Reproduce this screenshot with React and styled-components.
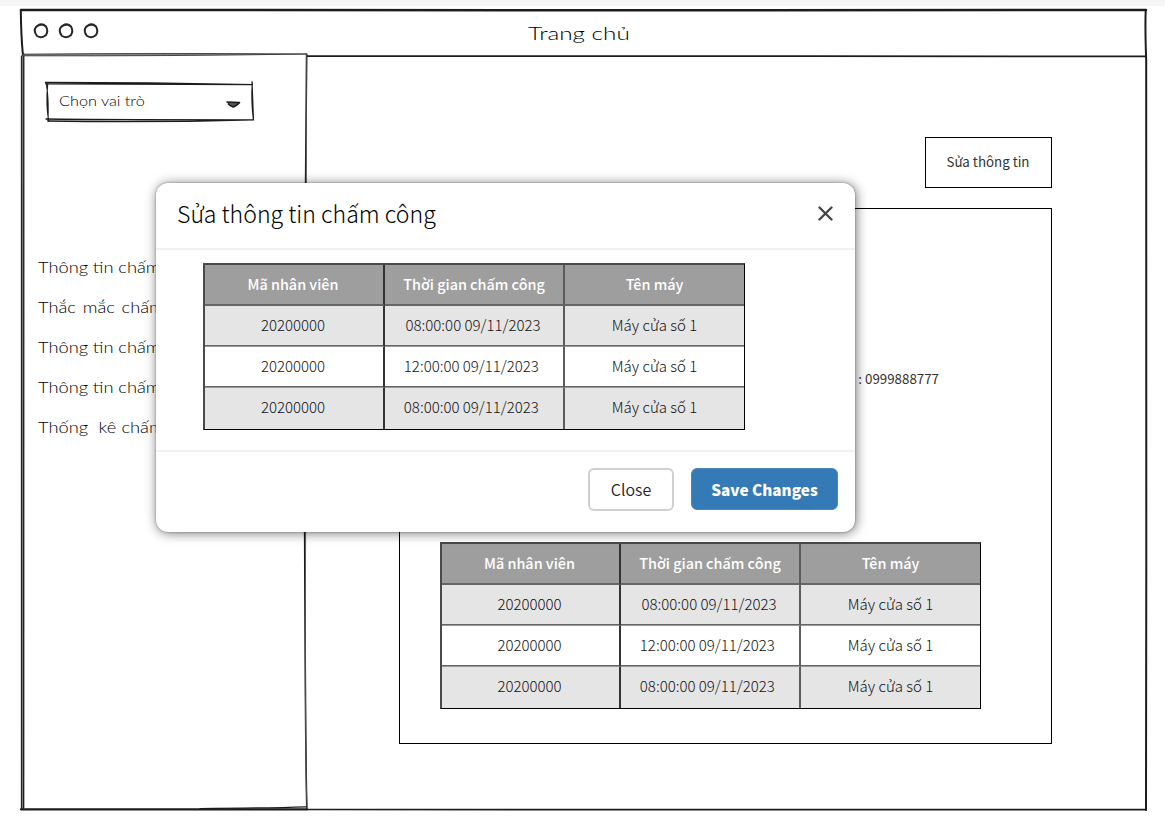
import React from 'react';
import styled, { createGlobalStyle } from 'styled-components';

const GlobalStyle = createGlobalStyle`
  * { box-sizing: border-box; }
  body {
    margin: 0;
    background: #fff;
    color: #333;
    font-family: "Noto Sans CJK SC", "Noto Sans", sans-serif;
  }
`;

const Page = styled.div`
  position: relative;
  width: 1165px;
  height: 825px;
  overflow: hidden;
`;

const TopStrip = styled.div`
  height: 6px;
  background: #f5f5f5;
`;

const Frame = styled.div`
  position: relative;
  display: flex;
  flex-direction: column;
  width: 1126px;
  height: 802px;
  margin: 3px 0 0 21px;
`;

const Sketch = styled.svg`
  position: absolute;
  inset: 0;
  width: 100%;
  height: 100%;
  overflow: visible;
  pointer-events: none;
  fill: none;
  stroke: #1c1c1c;
  stroke-linecap: round;
`;

const TitleBar = styled.header`
  display: flex;
  align-items: center;
  height: 46px;
`;

const Dots = styled.svg`
  width: 70px;
  height: 20px;
  margin: -2px 0 0 11px;
  fill: none;
  stroke: #262626;
  stroke-width: 2;
`;

const Hand = styled.span`
  display: block;
  width: max-content;
  font-family: Lato, "Open Sans", sans-serif;
  font-weight: 300;
  font-size: ${(p) => p.$size}px;
  line-height: 20px;
  word-spacing: ${(p) => p.$gap || 0}px;
  color: #000;
  white-space: pre;
  transform: scaleX(${(p) => p.$stretch});
  transform-origin: left center;
`;

const PageTitle = styled.div`
  margin: 1px 0 0 426px;
`;

const Columns = styled.div`
  display: flex;
  flex: 1;
`;

const Sidebar = styled.aside`
  width: 286px;
  padding: 27px 0 0 25px;
`;

const RoleSelect = styled.div`
  position: relative;
  display: flex;
  align-items: center;
  justify-content: space-between;
  width: 207px;
  height: 39px;
  padding: 0 12px 1px 13px;
`;

const Arrow = styled.svg`
  width: 16px;
  height: 9px;
  margin-top: 6px;
  fill: #555;
  stroke: #1c1c1c;
  stroke-linejoin: round;
`;

const Menu = styled.nav`
  display: flex;
  flex-direction: column;
  gap: 20px;
  margin: 136px 0 0 -8px;
`;

const Main = styled.main`
  display: flex;
  flex-direction: column;
  align-items: flex-end;
  gap: 20px;
  width: 745px;
  padding-top: 82px;
`;

const EditButton = styled.button`
  width: 127px;
  height: 51px;
  padding: 0 1px 2px 0;
  border: 1px solid #000;
  background: #fff;
  color: #333;
  font: 400 13.33px "Noto Sans CJK SC", "Noto Sans", sans-serif;
`;

const Card = styled.section`
  display: flex;
  flex-direction: column;
  justify-content: space-between;
  width: 653px;
  height: 536px;
  padding: 160px 0 34px 40px;
  border: 1px solid #000;
`;

const Phone = styled.div`
  align-self: flex-end;
  margin-right: 112px;
  font-size: 13.33px;
  line-height: 20px;
`;

const Table = styled.div`
  display: grid;
  grid-template-columns: ${(p) => p.$columns};
  grid-auto-rows: 41px;
  width: max-content;
  border: solid #000;
  border-width: 2px 1px 1px 2px;
  border-top-color: #4a4a4a;
  border-left-color: #4a4a4a;
`;

const Cell = styled.div`
  display: flex;
  align-items: center;
  justify-content: center;
  padding: 0 ${(p) => (p.$col === 2 ? 0 : p.$head && p.$col === 1 ? 0 : 2)}px ${(p) => (p.$head ? 2 : p.$last ? 4 : 3)}px 0;
  font-size: ${(p) => (p.$head ? 14.4 : 15)}px;
  font-weight: ${(p) => (p.$head ? 500 : 300)};
  white-space: pre;
  color: ${(p) => (p.$head ? '#fff' : '#111')};
  background: ${(p) => (p.$head ? '#9e9e9e' : p.$shade ? '#e5e5e5' : '#fff')};
  border-right: ${(p) => (p.$col === 2 ? '0' : p.$col === 0 ? '2px solid #333' : '2px solid #5c5c5c')};
  border-bottom: ${(p) => (p.$head ? '2px solid #666' : p.$last ? '0' : '1px solid #999')};
  box-shadow: ${(p) => (p.$head || p.$last ? 'none' : 'inset 0 -1px #666')};
`;

const Dialog = styled.div`
  position: absolute;
  left: 156px;
  top: 183px;
  display: flex;
  flex-direction: column;
  width: 699px;
  height: 349px;
  border-radius: 12px;
  background: #fff;
  box-shadow: 0 0 2px rgba(0, 0, 0, 0.4), 1px 1px 12px rgba(0, 0, 0, 0.55);
`;

const DialogHeader = styled.div`
  display: flex;
  align-items: center;
  justify-content: space-between;
  height: 67px;
  padding: 0 22px 0 21px;
  border-bottom: 2px solid #f1f1f1;
`;

const DialogTitle = styled.h2`
  margin: -5px 0 0;
  font-size: 23.1px;
  font-weight: 300;
  line-height: 34px;
  color: #000;
`;

const CloseIcon = styled.svg`
  width: 15px;
  height: 15px;
  margin-top: -4px;
  stroke: #444;
  stroke-width: 2.3;
  stroke-linecap: round;
`;

const DialogBody = styled.div`
  height: 202px;
  padding: 13px 0 0 47px;
  border-bottom: 2px solid #f1f1f1;
`;

const DialogFooter = styled.div`
  display: flex;
  justify-content: flex-end;
  gap: 17px;
  padding: 16px 17px 0 0;
`;

const Button = styled.button`
  width: ${(p) => (p.$primary ? 147 : 86)}px;
  height: ${(p) => (p.$primary ? 42 : 43)}px;
  padding: 0 0 1px;
  border: ${(p) => (p.$primary ? '1px solid #4a88bd' : '2px solid #d0d0d0')};
  border-radius: 6px;
  background: ${(p) => (p.$primary ? '#337ab7' : '#fff')};
  color: ${(p) => (p.$primary ? '#fff' : '#222')};
  font: ${(p) => (p.$primary ? '900 15.3px' : '350 16px')} "Noto Sans CJK SC", "Noto Sans", sans-serif;
`;

const HEADINGS = ['Mã nhân viên', 'Thời gian chấm công', 'Tên máy'];
const ROWS = [
  ['20200000', '08:00:00 09/11/2023', 'Máy cửa số 1'],
  ['20200000', '12:00:00 09/11/2023 ', 'Máy cửa số 1'],
  ['20200000', '08:00:00 09/11/2023 ', 'Máy cửa số 1'],
];
const MENU = [
  ['Thông tin chấm', -0.2],
  ['Thắc mắc chấm', 1.4],
  ['Thông tin chấm', -0.2],
  ['Thông tin chấm', -0.2],
  ['Thống  kê chấm', 0.2],
];

function AttendanceTable({ columns }) {
  return (
    <Table $columns={columns}>
      {HEADINGS.map((h, c) => (
        <Cell key={h} $head $col={c}>{h}</Cell>
      ))}
      {ROWS.map((row, r) =>
        row.map((value, c) => (
          <Cell key={`${r}-${c}`} $col={c} $shade={r % 2 === 0} $last={r === ROWS.length - 1}>
            {value}
          </Cell>
        ))
      )}
    </Table>
  );
}

export default function App() {
  return (
    <>
      <GlobalStyle />
      <Page>
        <TopStrip />
        <Frame>
          <Sketch viewBox="21 9 1126 802" preserveAspectRatio="none">
            <path d="M21 10 Q400 9.6 700 10.2 T1146 10" strokeWidth="2.5" />
            <path d="M20.8 10 Q21 35 23 56" strokeWidth="2" />
            <path d="M307 56.2 Q600 56.4 800 56.2 T1146 56.4" strokeWidth="1.8" />
            <path d="M1145.7 10 Q1145 30 1146.2 60 Q1147 350 1146.3 560 T1146 810" strokeWidth="2" />
            <path d="M22.6 56 V808" stroke="#777" strokeWidth="2.4" />
            <path d="M21.4 56 Q22 400 21.4 809" strokeWidth="1.1" />
            <path d="M23.8 54 Q23.4 400 23.7 808" strokeWidth="1.3" />
            <path d="M23 55.8 Q170 56.2 306 54 Q150 53 23 54.2 Z" fill="#888" stroke="#333" strokeWidth="0.9" />
            <path d="M306.7 54 Q304 330 304.7 540 T306.8 808" strokeWidth="1.6" />
            <path d="M306.3 54 Q306.4 330 305.6 540 T307 808" stroke="#555" strokeWidth="0.9" />
            <path d="M21 809.3 H307" strokeWidth="2.3" />
            <path d="M200 808.6 Q270 808 306 806.8" strokeWidth="1.3" />
            <path d="M307 809.5 Q800 810 1146 809.7" strokeWidth="1.7" />
          </Sketch>
          <TitleBar>
            <Dots viewBox="32 21 70 20">
              <path d="M38 25.5 Q42 22.8 46 26.5 Q48.6 31 46 35 Q42 38.8 37 36 Q33 31 36 27 Q38 24.8 42 24.5" />
              <path d="M63 25.5 Q67 22.8 71 26.5 Q73.6 31 71 35 Q67 38.8 62 36 Q58 31 61 27 Q63 24.8 67 24.5" />
              <path d="M88 25.5 Q92 22.8 96 26.5 Q98.6 31 96 35 Q92 38.8 87 36 Q83 31 86 27 Q88 24.8 92 24.5" />
            </Dots>
            <PageTitle>
              <Hand $size={18} $stretch={1.35}>Trang chủ</Hand>
            </PageTitle>
          </TitleBar>
          <Columns>
            <Sidebar>
              <RoleSelect>
                <Sketch viewBox="46 82 207 39" preserveAspectRatio="none">
                  <path d="M45.5 82.5 Q150 82.5 253 84.7 Q150 84 46 83.8" strokeWidth="1.3" />
                  <path d="M252 81.5 L253.5 120.5 Q251 100 252.3 83" strokeWidth="1.2" />
                  <path d="M46 119 Q100 119.8 253 119.8 Q150 122.8 48 121" strokeWidth="1.3" />
                  <path d="M46 83 Q48.8 95 48 121 M47.8 83 Q45.6 105 48.8 121" strokeWidth="1.1" />
                </Sketch>
                <Hand $size={14} $stretch={1.16}>Chọn vai trò</Hand>
                <Arrow viewBox="0 0 16 9">
                  <path d="M1.5 2 L14.5 2.6 Q10 6.8 8 7 Q5 6 3 3.5" strokeWidth="1.5" />
                </Arrow>
              </RoleSelect>
              <Menu>
                {MENU.map(([label, gap], i) => (
                  <Hand key={i} $size={15} $stretch={1.22} $gap={gap}>{label}</Hand>
                ))}
              </Menu>
            </Sidebar>
            <Main>
              <EditButton>Sửa thông tin</EditButton>
              <Card>
                <Phone>: 0999888777</Phone>
                <AttendanceTable columns="179px 180px 179px" />
              </Card>
            </Main>
          </Columns>
        </Frame>
        <Dialog role="dialog">
          <DialogHeader>
            <DialogTitle>Sửa thông tin chấm công</DialogTitle>
            <CloseIcon viewBox="0 0 15 15">
              <path d="M1.5 1.5 L13.5 13.5 M13.5 1.5 L1.5 13.5" />
            </CloseIcon>
          </DialogHeader>
          <DialogBody>
            <AttendanceTable columns="180px 180px 179px" />
          </DialogBody>
          <DialogFooter>
            <Button>Close</Button>
            <Button $primary>Save Changes</Button>
          </DialogFooter>
        </Dialog>
      </Page>
    </>
  );
}
